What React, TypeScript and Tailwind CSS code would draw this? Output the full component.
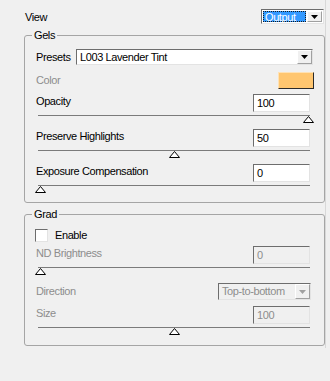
import React from 'react';

// Win-style sunken edge used for text boxes, combos and the checkbox
const sunken = 'border border-t-[#6d6d6d] border-l-[#6d6d6d] border-r-[#e3e3e3] border-b-[#e3e3e3]';

const DownArrow = ({ disabled = false }: { disabled?: boolean }) => (
  <svg width="7" height="4" viewBox="0 0 7 4">
    <polygon points="0,0 7,0 3.5,4" fill={disabled ? '#a0a0a0' : '#000'} />
  </svg>
);

const ArrowButton = ({ disabled = false }: { disabled?: boolean }) => (
  <div className="w-[15px] h-full flex items-center justify-center bg-[#f0f0f0] border border-t-white border-l-white border-r-[#a0a0a0] border-b-[#a0a0a0]">
    <DownArrow disabled={disabled} />
  </div>
);

const TextBox = ({ value, disabled = false }: { value: string; disabled?: boolean }) => (
  <div
    className={`w-[57px] h-[18px] mr-[4px] pl-[3px] flex items-center ${sunken} ${
      disabled ? 'bg-[#f0f0f0] text-[#8d8d8d]' : 'bg-white text-black'
    }`}
  >
    {value}
  </div>
);

// value 0..1 along the track
const Slider = ({ value }: { value: number }) => (
  <div className="relative w-[272px] h-[8px] ml-[2px] mt-[3px]">
    <div className="h-[2px] border-t border-[#7b7b7b] border-b-white" />
    <svg
      width="11"
      height="7"
      viewBox="0 0 11 7"
      className="absolute top-[1px]"
      style={{ left: 2 + value * 268 - 5.5 }}
    >
      <polygon points="5.5,0.5 10.5,6.5 0.5,6.5" fill="#fff" stroke="#000" strokeWidth="1" />
    </svg>
  </div>
);

const SliderRow = ({
  label,
  value,
  pos,
  disabled = false,
  className = '',
}: {
  label: string;
  value: string;
  pos: number;
  disabled?: boolean;
  className?: string;
}) => (
  <div className={className}>
    <div className="flex items-start">
      <span className={`flex-1 leading-[14px] ${disabled ? 'text-[#8d8d8d]' : ''}`}>{label}</span>
      <TextBox value={value} disabled={disabled} />
    </div>
    <Slider value={pos} />
  </div>
);

const Group = ({
  title,
  className = '',
  children,
}: {
  title: string;
  className?: string;
  children: React.ReactNode;
}) => (
  <div className={`relative ml-[24px] w-[301px] border border-[#a5a5a5] rounded-[3px] pl-[11px] pr-[10px] ${className}`}>
    <span className="absolute left-[7px] top-[-8px] px-[2px] bg-[#f0f0f0] leading-[14px]">{title}</span>
    {children}
  </div>
);

export default function App() {
  return (
    <div
      className="w-[330px] h-[381px] bg-[#f0f0f0] overflow-hidden text-[11px] tracking-[-0.4px] text-black"
      style={{ fontFamily: '"Liberation Sans", Arial, sans-serif' }}
    >
      <div className="w-[326px] h-[348px] border-r border-[#d8d8d8]">
        {/* View selector */}
        <div className="flex items-center justify-between pt-[9px] pl-[25px] pr-[1px]">
          <span className="leading-[14px]">View</span>
          <div className={`w-[63px] h-[15px] flex bg-white p-[1px] ${sunken}`}>
            <div className="flex-1 mr-[1px] bg-[#3399ff] text-white border border-dotted border-[#1a1a1a] pl-[1px] leading-[10px]">
              Output
            </div>
            <ArrowButton />
          </div>
        </div>

        {/* Gels */}
        <Group title="Gels" className="mt-[11px] h-[168px] pt-[13px]">
          <div className="flex items-center h-[16px]">
            <span className="w-[40px]">Presets</span>
            <div className={`w-[237px] h-full flex bg-white ${sunken}`}>
              <span className="flex-1 pl-[3px] leading-[14px]">L003 Lavender Tint</span>
              <ArrowButton />
            </div>
          </div>
          <div className="flex items-center h-[17px] mt-[7px]">
            <span className="flex-1 text-[#8d8d8d]">Color</span>
            <div className="w-[36px] h-full bg-[#ffc670] border border-t-[#ffe2b5] border-l-[#ffe2b5] border-r-[#2a2a2a] border-b-[#2a2a2a]" />
          </div>
          <SliderRow label="Opacity" value="100" pos={1} className="mt-[5px]" />
          <SliderRow label="Preserve Highlights" value="50" pos={0.5} className="mt-[6px]" />
          <SliderRow label="Exposure Compensation" value="0" pos={0} className="mt-[6px]" />
        </Group>

        {/* Grad */}
        <Group title="Grad" className="mt-[11px] h-[132px] pt-[14px]">
          <div className="flex items-center h-[13px] -ml-[1px]">
            <div className={`w-[13px] h-[13px] bg-white ${sunken}`} />
            <span className="ml-[7px]">Enable</span>
          </div>
          <SliderRow label="ND Brightness" value="0" pos={0} disabled className="mt-[4px]" />
          <div className="flex items-center h-[17px] mt-[8px]">
            <span className="flex-1 text-[#8d8d8d]">Direction</span>
            <div className={`w-[93px] h-full mr-[3px] flex bg-[#f0f0f0] ${sunken}`}>
              <span className="flex-1 pl-[3px] leading-[14px] text-[#8d8d8d]">Top-to-bottom</span>
              <ArrowButton disabled />
            </div>
          </div>
          <SliderRow label="Size" value="100" pos={0.5} disabled className="mt-[6px]" />
        </Group>
      </div>
    </div>
  );
}
